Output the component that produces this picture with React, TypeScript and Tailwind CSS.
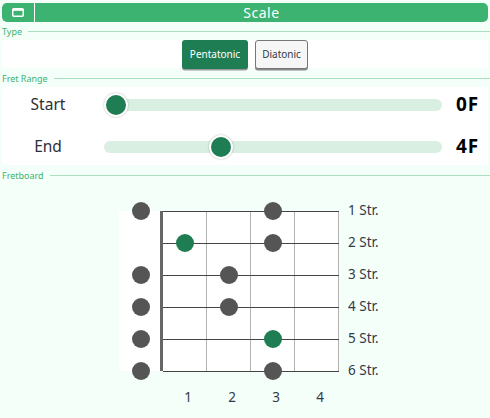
import React from 'react';

const font = '[font-family:"Noto_Sans",sans-serif]';

function Legend({ label, children }: { label: string; children: React.ReactNode }) {
  return (
    <section>
      <div className="flex h-[18px] items-center">
        <span className="pl-[2px] pr-[6px] text-[9px] leading-none text-[#3cb371]">{label}</span>
        <div className="h-px flex-1 bg-[#a8e0c0]" />
      </div>
      {children}
    </section>
  );
}

function Slider({ label, value, thumb }: { label: string; value: string; thumb: number }) {
  return (
    <div className="flex h-[42px] shrink-0 items-center">
      <div className="w-[92px] pb-[1px] text-center text-[15.5px] text-[#2b2f38]">{label}</div>
      <div className="relative ml-[10px] h-3 w-[338px] rounded-full bg-[#d8efe1]">
        <div
          className="absolute top-1/2 h-6 w-6 -translate-x-1/2 -translate-y-1/2 rounded-full border-2 border-white bg-[#1f7d53] shadow-[0_0_2px_rgba(0,0,0,0.3)]"
          style={{ left: thumb }}
        />
      </div>
      <div className="flex-1 pb-[1px] pl-[14px] text-[19px] font-bold leading-none tracking-[1px] text-black">{value}</div>
    </div>
  );
}

const strings = [211, 243, 275, 307, 339, 371].map(y => y - 200);
const frets = [206, 250, 294, 338].map(x => x - 100);

const dots = [
  { x: 141, y: 211, c: '#555555' },
  { x: 273, y: 211, c: '#555555' },
  { x: 185, y: 243, c: '#1f7d53' },
  { x: 273, y: 243, c: '#555555' },
  { x: 141, y: 275, c: '#555555' },
  { x: 229, y: 275, c: '#555555' },
  { x: 141, y: 307, c: '#555555' },
  { x: 229, y: 307, c: '#555555' },
  { x: 141, y: 339, c: '#555555' },
  { x: 273, y: 339, c: '#1f7d53' },
  { x: 141, y: 371, c: '#555555' },
  { x: 273, y: 371, c: '#555555' },
];

function Fretboard() {
  return (
    <div className="ml-[100px] mt-[16px] text-[#333a45]">
      <div className="flex">
        <svg width="242" height="182" viewBox="0 0 242 182" className="shrink-0">
          <rect x="19" y="11" width="220" height="160" fill="#ffffff" />
          {frets.map(x => (
            <line key={x} x1={x + 0.5} y1="11" x2={x + 0.5} y2="171" stroke="#b3b3b3" strokeWidth="1" />
          ))}
          {strings.map(y => (
            <line key={y} x1="63" y1={y + 0.5} x2="239" y2={y + 0.5} stroke="#444444" strokeWidth="1" />
          ))}
          <rect x="60" y="11" width="3" height="160" fill="#666666" />
          {dots.map(d => (
            <circle key={`${d.x}-${d.y}`} cx={d.x - 100} cy={d.y - 200} r="9" fill={d.c} />
          ))}
        </svg>
        <div className="ml-[6px] mt-[-5px] flex flex-col text-[13.5px]">
          {[1, 2, 3, 4, 5, 6].map(n => (
            <div key={n} className="flex h-8 items-center whitespace-nowrap leading-none">
              {n} Str.
            </div>
          ))}
        </div>
      </div>
      <div className="flex pl-[66px] text-[13.5px]">
        {[1, 2, 3, 4].map(n => (
          <div key={n} className="w-[44px] text-center leading-[20px]">{n}</div>
        ))}
      </div>
    </div>
  );
}

export default function App() {
  return (
    <div className={`h-[418px] w-[490px] overflow-hidden bg-[#f5fffa] ${font}`}>
      <div className="px-[2px] pt-[3px]">
        <div className="flex h-[19px] items-center rounded-[5px] bg-[#3cb371] text-white">
          <div className="flex h-full w-[33px] items-center justify-center border-r border-white">
            <svg width="12" height="9" viewBox="0 0 12 9">
              <rect x="0.75" y="0.75" width="10.5" height="7.5" rx="1" fill="none" stroke="#ffffff" strokeWidth="1.5" />
              <rect x="1" y="1" width="10" height="1.8" fill="#ffffff" />
            </svg>
          </div>
          <div className="flex-1 text-center text-[14px] leading-none tracking-[0.5px]">Scale</div>
        </div>
      </div>
      <Legend label="Type">
        <div className="mx-[2px] flex h-[28px] justify-center gap-[7px] rounded-[4px] bg-white">
          <button className="h-[29px] w-[66px] rounded-[3px] bg-[#1f7d53] text-[10px] text-white shadow-[0_1.5px_0_#999]">Pentatonic</button>
          <button className="h-[29px] w-[53px] rounded-[3px] border border-[#777] bg-[#f6f6f6] text-[10px] text-[#333a45] shadow-[0_1.5px_0_#888]">Diatonic</button>
        </div>
      </Legend>
      <div className="h-px" />
      <Legend label="Fret Range">
        <div className="mx-[2px] flex h-[78px] flex-col justify-center rounded-[4px] bg-white">
          <Slider label="Start" value="0F" thumb={12} />
          <Slider label="End" value="4F" thumb={117} />
        </div>
      </Legend>
      <div className="h-px" />
      <Legend label="Fretboard">
        <Fretboard />
      </Legend>
    </div>
  );
}
